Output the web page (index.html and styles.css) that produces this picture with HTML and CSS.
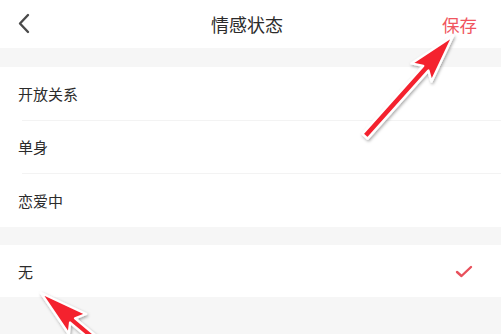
FILE: index.html
```html
<!DOCTYPE html>
<html lang="zh">
<head>
<meta charset="utf-8">
<link rel="stylesheet" href="styles.css">
</head>
<body>
<div class="page">
  <header class="nav">
    <span class="back">
      <svg width="14" height="22" viewBox="0 0 14 22"><polyline points="11,2 3,10.5 11,19" fill="none" stroke="#4a4a4a" stroke-width="2.4" stroke-linecap="round" stroke-linejoin="round"/></svg>
    </span>
    <h1 class="title">情感状态</h1>
    <span class="save">保存</span>
  </header>
  <div class="gap"></div>
  <ul class="group">
    <li class="row">开放关系</li>
    <li class="row">单身</li>
    <li class="row">恋爱中</li>
  </ul>
  <div class="gap gap2"></div>
  <ul class="group">
    <li class="row selected">无
      <svg class="check" width="18" height="13" viewBox="0 0 18 13"><polyline points="2,7 6.5,11 16,2" fill="none" stroke="#e8505b" stroke-width="2.4" stroke-linecap="round" stroke-linejoin="round"/></svg>
    </li>
  </ul>
  <svg class="arrows" width="501" height="334" viewBox="0 0 501 334">
    <defs>
      <filter id="sh" x="-20%" y="-20%" width="140%" height="140%">
        <feDropShadow dx="1" dy="1.5" stdDeviation="1.5" flood-color="#000" flood-opacity="0.35"/>
      </filter>
    </defs>
    <polygon filter="url(#sh)" points="453,36 431.5,81.5 428.4,70.6 367.6,138.6 362.4,133.9 423.2,65.9 411.4,63.4" fill="#f4212f" stroke="#fff" stroke-width="2.4" stroke-linejoin="round"/>
    <polygon filter="url(#sh)" points="41,293 86,314 75.1,318.4 128.6,363.2 124,368 70.1,322.6 68.8,334" fill="#f4212f" stroke="#fff" stroke-width="2.4" stroke-linejoin="round"/>
  </svg>
</div>
</body>
</html>
```
FILE: styles.css
```css
* { box-sizing: border-box; }
html, body { margin: 0; padding: 0; }
body {
  background: #f6f6f6;
  font-family: "Noto Sans CJK SC", "Noto Sans", sans-serif;
  color: #2b2b2b;
  width: 501px;
  height: 334px;
  overflow: hidden;
}
.page { position: relative; width: 501px; height: 334px; }
.nav {
  height: 48px;
  background: #fff;
  display: flex;
  align-items: center;
  justify-content: space-between;
  padding: 0 24px 0 17px;
}
.back { display: flex; width: 60px; }
.title {
  margin: 0;
  font-size: 18px;
  font-weight: 400;
  color: #2b2b2b;
  line-height: 48px;
}
.save {
  width: 60px;
  text-align: right;
  font-size: 17.5px;
  color: #f05560;
}
.gap { height: 19px; }
.gap2 { height: 18px; }
.group {
  list-style: none;
  margin: 0;
  padding: 0;
  background: #fff;
}
.row {
  height: 53px;
  display: flex;
  align-items: center;
  justify-content: space-between;
  padding: 0 28px 0 18px;
  font-size: 15px;
  position: relative;
}
.row + .row::before {
  content: "";
  position: absolute;
  left: 22px;
  right: 0;
  top: 0;
  height: 1px;
  background: #f3f3f3;
}
.row:nth-child(3) { height: 54px; }
.selected { height: 52px; }
.arrows { position: absolute; left: 0; top: 0; pointer-events: none; }
```
